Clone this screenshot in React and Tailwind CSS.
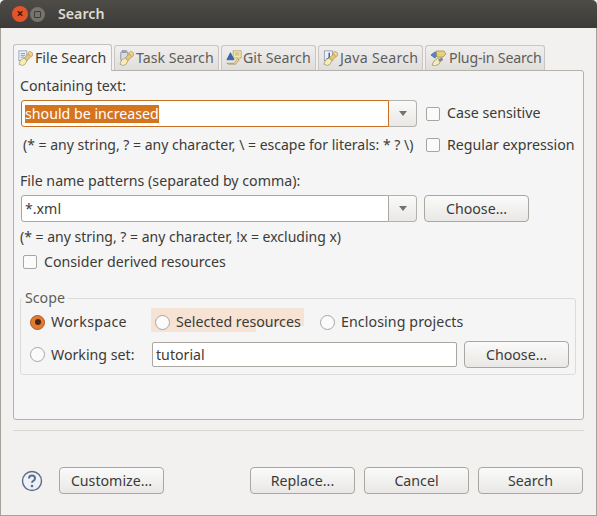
const font = "font-['Noto_Sans','Open_Sans',sans-serif]";

const Handle = () => (
  <g>
    <path d="M7 9l5-5 3 3-5 5z" fill="#e8c870" stroke="#a08848" strokeWidth="0.7" />
    <path d="M11 3.5l2-2 3 1.5.5 3-2 1.5z" fill="#f0d890" stroke="#a08848" strokeWidth="0.7" />
    <path d="M1 16l2-5 4-2 3 3-2 4-3 1.5z" fill="#f6ecb8" stroke="#988858" strokeWidth="0.7" />
  </g>
);

const FileIcon = () => (
  <svg width="16" height="16" viewBox="0 0 18 18" className="shrink-0">
    <rect x="1" y="1" width="9" height="11" fill="#eef2f8" stroke="#7d8ca8" strokeWidth="0.8" />
    <path d="M3 4h5M3 6h5M3 8h4" stroke="#5a7fb8" strokeWidth="0.8" />
    <Handle />
  </svg>
);

const TaskIcon = () => (
  <svg width="16" height="16" viewBox="0 0 18 18" className="shrink-0">
    <rect x="2" y="2" width="8" height="10" rx="1" fill="#d8dce4" stroke="#70788c" strokeWidth="0.8" />
    <rect x="4" y="0.5" width="4" height="2.5" fill="#a8acb4" stroke="#70788c" strokeWidth="0.5" />
    <Handle />
  </svg>
);

const GitIcon = () => (
  <svg width="16" height="16" viewBox="0 0 18 18" className="shrink-0">
    <rect x="8" y="1" width="9" height="8" fill="#f4e8a8" stroke="#a09050" strokeWidth="0.7" />
    <path d="M10 3.5h5M10 5.5h5" stroke="#a09050" strokeWidth="0.7" />
    <path d="M1 11l4-8 4 8z" fill="#3868b0" stroke="#204888" strokeWidth="0.7" />
    <path d="M1 15h8l4-5 2 1-4 5H3z" fill="#f0d890" stroke="#a08848" strokeWidth="0.7" />
  </svg>
);

const JavaIcon = () => (
  <svg width="16" height="16" viewBox="0 0 18 18" className="shrink-0">
    <rect x="1.5" y="1" width="9" height="11" fill="#eef2f8" stroke="#7d8ca8" strokeWidth="0.8" />
    <path d="M7 3v5q0 2-2 2H4" fill="none" stroke="#2850a0" strokeWidth="1.5" />
    <Handle />
  </svg>
);

const PluginIcon = () => (
  <svg width="18" height="16" viewBox="0 0 18 16" className="shrink-0">
    <path d="M1 5l4-3 3 2-3 4z" fill="#5888c8" stroke="#305890" strokeWidth="0.7" />
    <path d="M6 1h8l2 3-3 3H7z" fill="#e8d078" stroke="#a08848" strokeWidth="0.7" />
    <path d="M2 15l2-4 4-3 3 2-2 4-4 2z" fill="#f6ecb8" stroke="#988858" strokeWidth="0.7" />
    <path d="M8 10l4-3 1 3-3 2z" fill="#808890" />
  </svg>
);

const Tab = ({ icon, label, width, active }) => (
  <div
    className={
      active
        ? `-mb-px z-10 flex h-[27px] items-center gap-px rounded-t-[3px] border border-b-0 border-[#c4c1bc] bg-[#f5f5f5] pl-[4px] ${width}`
        : `mt-[2px] flex h-[25px] items-center gap-px rounded-t-[3px] border border-b-0 border-[#c9c6c1] bg-gradient-to-b from-[#f0efee] to-[#dfdedc] pl-[4px] text-[#5f5e5a] ${width}`
    }
  >
    {icon}
    <span className="whitespace-nowrap">{label}</span>
  </div>
);

const Button = ({ label, className }) => (
  <div
    className={`flex h-[27px] items-center justify-center rounded-[4px] border border-[#aaa6a0] bg-gradient-to-b from-[#fafafa] to-[#e9e8e6] text-[#3c3b37] ${className}`}
  >
    {label}
  </div>
);

const Combo = ({ value, focused }) => (
  <div className="flex h-[27px] w-[396px]">
    <div
      className={`flex flex-1 items-center rounded-l-[3px] border bg-white pl-[3px] ${
        focused ? "border-[#c96f22]" : "border-[#aaa6a0]"
      }`}
    >
      {focused ? <span className="bg-[#d4741f] leading-[18px] text-white">{value}</span> : <span>{value}</span>}
    </div>
    <div className="flex w-[28px] items-center justify-center rounded-r-[4px] border border-l-0 border-[#b4b0aa] bg-gradient-to-b from-[#fafafa] to-[#e9e8e6]">
      <div className="h-0 w-0 border-x-[4px] border-t-[5px] border-x-transparent border-t-[#75736e]" />
    </div>
  </div>
);

const Check = ({ label }) => (
  <div className="flex h-[20px] items-center gap-[7px]">
    <div className="h-[14px] w-[14px] rounded-[2px] border border-[#a9a6a0] bg-[#fbfbfb]" />
    <span className="-mt-px">{label}</span>
  </div>
);

const Radio = ({ label, checked, labelClass = "" }) => (
  <div className="flex items-center gap-[6px]">
    {checked ? (
      <div className="flex h-[15px] w-[15px] items-center justify-center rounded-full border border-[#b5591f] bg-[#e07b35]">
        <div className="h-[6px] w-[6px] rounded-full bg-[#4a2510]" />
      </div>
    ) : (
      <div className="h-[15px] w-[15px] rounded-full border border-[#a9a6a0] bg-[#fbfbfb]" />
    )}
    <span className={labelClass}>{label}</span>
  </div>
);

export default function App() {
  return (
    <div className={`flex h-[516px] w-[597px] flex-col overflow-hidden bg-[#f2f1f0] text-[14.2px] text-[#3c3b37] ${font}`}>
      <div className="flex h-[28px] shrink-0 items-center rounded-t-[5px] bg-gradient-to-b from-[#4d4c47] to-[#3c3b37] pl-[12px]">
        <div className="flex h-[16px] w-[16px] items-center justify-center rounded-full bg-[#e2542a] text-[12px] font-bold leading-none text-[#3c1508]">
          ×
        </div>
        <div className="ml-[2px] flex h-[15px] w-[15px] items-center justify-center rounded-full bg-[#75736c]">
          <div className="h-[7px] w-[7px] rounded-[1px] border border-[#3c3b37]" />
        </div>
        <span className="-mt-px ml-[13px] font-semibold text-[#dfdbd2]">Search</span>
      </div>

      <div className="flex flex-1 flex-col border-x border-b border-[#a5a29c] px-[12px] pt-[16px]">
        <div className="flex h-[26px] items-end gap-[2px]">
          <Tab active icon={<FileIcon />} label="File Search" width="w-[99px]" />
          <Tab icon={<TaskIcon />} label="Task Search" width="w-[105px]" />
          <Tab icon={<GitIcon />} label="Git Search" width="w-[95px]" />
          <Tab icon={<JavaIcon />} label="Java Search" width="w-[105px] tracking-[0.25px]" />
          <Tab icon={<PluginIcon />} label="Plug-in Search" width="w-[120px] tracking-[-0.2px]" />
        </div>

        <div className="flex h-[350px] w-[571px] flex-col rounded-[3px] rounded-tl-none border border-[#b5b2ac] bg-[#f5f5f5] pl-[7px] pr-[7px]">
          <div className="-ml-px mt-[5px] leading-[20px]">Containing text:</div>
          <div className="mt-[4px] flex items-center gap-[9px]">
            <Combo focused value="should be increased" />
            <Check label="Case sensitive" />
          </div>
          <div className="mt-[8px] flex h-[20px] items-center">
            <span className="-mt-px ml-[2px] w-[403px] whitespace-nowrap text-[14px]">
              (* = any string, ? = any character, \ = escape for literals: * ? \)
            </span>
            <Check label="Regular expression" />
          </div>
          <div className="-ml-px mt-[16px] leading-[20px]">File name patterns (separated by comma):</div>
          <div className="mt-[4px] flex items-center gap-[7px]">
            <Combo value="*.xml" />
            <Button label="Choose..." className="w-[105px]" />
          </div>
          <div className="-ml-px mt-[5px] text-[14px] leading-[20px]">(* = any string, ? = any character, !x = excluding x)</div>
          <div className="ml-[2px] mt-[5px]">
            <Check label="Consider derived resources" />
          </div>

          <div className="relative -ml-px mt-[26px] h-[77px] w-[556px] rounded-[3px] border border-[#dddbd8] pl-[9px]">
            <div className="absolute -top-[11px] left-[1px] bg-[#f5f5f5] px-[3px] leading-[20px] text-[#5f5e5a]">Scope</div>
            <div className="mt-[13px] flex h-[20px] items-center">
              <div className="w-[122px]">
                <Radio checked label="Workspace" labelClass="tracking-[0.3px]" />
              </div>
              <div className="relative w-[168px] pl-[3px]">
                <div className="absolute -left-px top-[-3px] h-[24px] w-[105px] bg-[#f6e3d3]" />
                <div className="absolute left-[104px] top-[-3px] h-[18px] w-[48px] bg-[#f6e3d3]" />
                <div className="relative">
                  <Radio label="Selected resources" />
                </div>
              </div>
              <Radio label="Enclosing projects" labelClass="tracking-[0.1px]" />
            </div>
            <div className="mt-[9px] flex items-center">
              <div className="w-[122px]">
                <Radio label="Working set:" />
              </div>
              <div className="flex h-[25px] w-[305px] items-center rounded-[2px] border border-[#aaa6a0] bg-white pl-[3px]">
                tutorial
              </div>
              <Button label="Choose..." className="ml-[7px] w-[105px]" />
            </div>
          </div>
        </div>

        <div className="mt-[10px] h-px w-[571px] bg-[#d9d7d3]" />

        <div className="mt-[36px] flex items-center">
          <svg width="22" height="22" viewBox="0 0 22 22" className="ml-[8px] shrink-0">
            <circle cx="11" cy="11" r="9.5" fill="#eef1f6" stroke="#5b6c8c" strokeWidth="1.4" />
            <path d="M8 8.5q0-3 3-3t3 2.8q0 1.6-1.7 2.5-1.3.7-1.3 2" fill="none" stroke="#5b6c8c" strokeWidth="2" />
            <circle cx="11" cy="16" r="1.3" fill="#5b6c8c" />
          </svg>
          <Button label="Customize..." className="ml-[16px] w-[105px]" />
          <Button label="Replace..." className="ml-[86px] w-[105px]" />
          <Button label="Cancel" className="ml-[9px] w-[105px]" />
          <Button label="Search" className="ml-[9px] w-[105px]" />
        </div>
      </div>
    </div>
  );
}
